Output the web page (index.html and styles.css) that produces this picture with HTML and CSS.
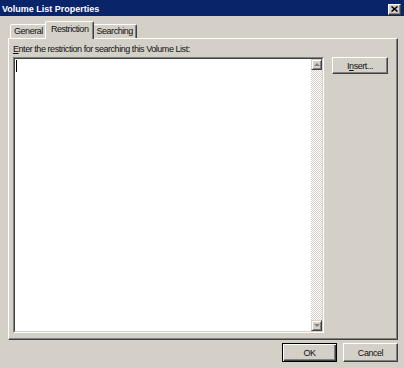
FILE: index.html
```html
<!DOCTYPE html>
<html>
<head>
<meta charset="utf-8">
<link rel="stylesheet" href="styles.css">
</head>
<body>
<div class="dialog">
  <div class="titlebar">
    <span class="title">Volume List Properties</span>
    <span class="close"><svg width="7" height="6" viewBox="0 0 7 6"><path d="M0.5 0.5L6.5 5.5M6.5 0.5L0.5 5.5" stroke="#000" stroke-width="1.6" fill="none"/></svg></span>
  </div>
  <div class="body">
    <div class="tabs">
      <div class="tab">General</div>
      <div class="tab active">Restriction</div>
      <div class="tab">Searching</div>
    </div>
    <div class="panel">
      <div class="label"><u>E</u>nter the restriction for searching this Volume List:</div>
      <div class="row">
        <div class="edit">
          <div class="edit-inner">
            <div class="editarea"><span class="caret"></span></div>
            <div class="vscroll">
              <div class="sbtn"><span class="arrow up"></span></div>
              <div class="track"></div>
              <div class="sbtn"><span class="arrow down"></span></div>
            </div>
          </div>
        </div>
        <button class="btn insert">I<u>n</u>sert...</button>
      </div>
    </div>
    <div class="footer">
      <button class="btn default">OK</button>
      <button class="btn">Cancel</button>
    </div>
  </div>
</div>
</body>
</html>
```
FILE: styles.css
```css
* { box-sizing: border-box; }
html, body { margin: 0; padding: 0; background: #d4d0c8; }
body {
  font-family: "Liberation Sans", Arial, sans-serif;
  font-size: 9px;
  letter-spacing: -0.45px;
  color: #111;
}
.dialog {
  width: 404px;
  height: 368px;
  background: #d4d0c8;
  display: flex;
  flex-direction: column;
}
.titlebar {
  height: 16px;
  background: #0a246a;
  display: flex;
  align-items: center;
  justify-content: space-between;
  padding: 2px 3px 0 2px;
}
.title {
  font-weight: bold;
  font-size: 9px;
  letter-spacing: 0;
  color: #fff;
  line-height: 12px;
}
.close {
  width: 13px;
  height: 11px;
  background: #d4d0c8;
  border: 1px solid;
  border-color: #fff #404040 #404040 #fff;
  box-shadow: inset -1px -1px #808080;
  display: flex;
  align-items: center;
  justify-content: center;
}
.close svg { display: block; }
.body {
  flex: 1;
  display: flex;
  flex-direction: column;
  padding: 5px 6px 0 8px;
}
.tabs {
  display: flex;
  align-items: flex-end;
  height: 17px;
  padding-left: 2px;
}
.tab {
  height: 14px;
  line-height: 12px;
  padding: 0 3px;
  border: 1px solid;
  border-bottom: none;
  border-color: #fff #404040 transparent #fff;
  box-shadow: inset -1px 0 #808080;
  border-radius: 2px 2px 0 0;
  background: #d4d0c8;
  white-space: nowrap;
}
.tab.active {
  height: 18px;
  line-height: 15px;
  margin: 0 -2px -1px;
  padding: 0 5px;
  position: relative;
  z-index: 1;
}
.panel {
  height: 302px;
  border: 1px solid;
  border-color: #fff #404040 #404040 #fff;
  box-shadow: inset -1px -1px #808080;
  padding: 4px 0 0 4px;
}
.label {
  height: 12px;
  line-height: 13px;
  margin-bottom: 2px;
  white-space: nowrap;
}
.row {
  display: flex;
  align-items: flex-start;
  gap: 8px;
}
.edit {
  width: 311px;
  height: 276px;
  border: 1px solid;
  border-color: #808080 #fff #fff #808080;
}
.edit-inner {
  height: 100%;
  border: 1px solid;
  border-color: #404040 #d4d0c8 #d4d0c8 #404040;
  display: flex;
}
.editarea {
  flex: 1;
  background: #fff;
}
.caret {
  display: block;
  width: 1px;
  height: 12px;
  margin: 1px 0 0 1px;
  background: #000;
}
.vscroll {
  width: 11px;
  display: flex;
  flex-direction: column;
}
.track {
  flex: 1;
  background-color: #fff;
  background-image: repeating-conic-gradient(#d4d0c8 0 25%, #fff 0 50%);
  background-size: 2px 2px;
}
.sbtn {
  height: 11px;
  background: #d4d0c8;
  border: 1px solid;
  border-color: #d4d0c8 #404040 #404040 #d4d0c8;
  box-shadow: inset 1px 1px #fff, inset -1px -1px #808080;
  display: flex;
  align-items: center;
  justify-content: center;
}
.arrow {
  width: 0;
  height: 0;
  border-left: 3px solid transparent;
  border-right: 3px solid transparent;
}
.arrow.up { border-bottom: 3px solid #808080; }
.arrow.down { border-top: 3px solid #808080; }
.btn {
  font: inherit;
  letter-spacing: inherit;
  color: #111;
  background: #d4d0c8;
  border: 1px solid;
  border-color: #fff #404040 #404040 #fff;
  box-shadow: inset -1px -1px #808080;
  padding: 0;
  margin: 0;
  line-height: 12px;
}
.insert {
  width: 56px;
  height: 17px;
}
.footer {
  display: flex;
  justify-content: flex-end;
  gap: 6px;
  margin-top: 3px;
}
.footer .btn {
  width: 55px;
  height: 19px;
}
.btn.default {
  border-color: #000;
  box-shadow: inset 1px 1px #fff, inset -1px -1px #404040, inset -2px -2px #808080;
}
```
